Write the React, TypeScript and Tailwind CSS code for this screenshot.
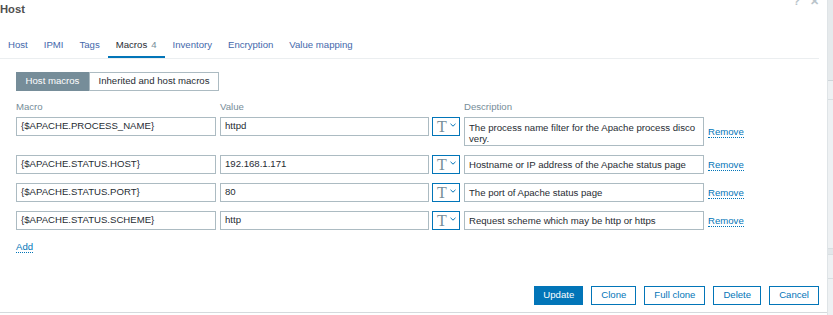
import React from "react";

const rows = [
  { macro: "{$APACHE.PROCESS_NAME}", value: "httpd", desc: ["The process name filter for the Apache process disco", "very."] },
  { macro: "{$APACHE.STATUS.HOST}", value: "192.168.1.171", desc: ["Hostname or IP address of the Apache status page"] },
  { macro: "{$APACHE.STATUS.PORT}", value: "80", desc: ["The port of Apache status page"] },
  { macro: "{$APACHE.STATUS.SCHEME}", value: "http", desc: ["Request scheme which may be http or https"] },
];

function TypeButton() {
  return (
    <div className="w-[28px] h-[19px] border border-[#0275b8] bg-white flex items-center pl-[4px] gap-[3px] box-border">
      <span className="font-['Liberation_Serif',serif] text-[16px] leading-[16px] text-[#768d99]">T</span>
      <svg width="6" height="4" viewBox="0 0 6 4" className="mt-[-3px]">
        <path d="M0.5 0.8 L3 3.2 L5.5 0.8" stroke="#0275b8" strokeWidth="1" fill="none" />
      </svg>
    </div>
  );
}

export default function App() {
  const tabs = [
    { label: "Host" },
    { label: "IPMI" },
    { label: "Tags" },
    { label: "Macros", count: "4", active: true },
    { label: "Inventory" },
    { label: "Encryption" },
    { label: "Value mapping" },
  ];
  return (
    <div className="w-[833px] h-[315px] flex bg-white font-['Liberation_Sans',Arial,sans-serif] text-[9.6px] text-[#1f2c33] overflow-hidden">
      <div className="w-[827px] h-[313px] border-b border-[#d5dadd] flex flex-col box-border">
        <div className="h-[31px] flex justify-between items-start">
          <div className="mt-[1.5px] text-[11.2px] leading-[14px] font-bold text-[#4f4f4f]">Host</div>
          <div className="flex gap-[10px] mr-[8px] mt-[-5px] text-[11px] leading-[12px] text-[#b9c4ca] font-bold">
            <span>?</span>
            <span>✕</span>
          </div>
        </div>
        <div className="h-[28px] mr-[8px] border-b border-[#ebeef0] flex box-border">
          {tabs.map((t) => (
            <div key={t.label} className="px-[8px] h-[27px] flex flex-col justify-between">
              <div className={"pt-[7.5px] leading-[12px] whitespace-nowrap " + (t.active ? "text-[#1f2c33]" : "text-[#4468ab]")}>
                {t.label}
                {t.count && <span className="text-[#768d99] ml-[4px]">{t.count}</span>}
              </div>
              <div className={"h-[2.5px] mx-[-8px] " + (t.active ? "bg-[#0275b8]" : "")}></div>
            </div>
          ))}
        </div>
        <div className="pl-[16px] flex flex-col">
          <div className="mt-[13px] flex h-[19px]">
            <div className="w-[73px] h-[19px] bg-[#768d99] text-white flex items-center justify-center">Host macros</div>
            <div className="w-[130px] h-[19px] border border-[#acbbc2] flex items-center justify-center box-border">Inherited and host macros</div>
          </div>
          <div className="mt-[9.5px] flex leading-[12px] text-[#768d99]">
            <div className="w-[204px]">Macro</div>
            <div className="w-[244px]">Value</div>
            <div>Description</div>
          </div>
          <div className="mt-[4.5px] flex flex-col gap-[9px]">
            {rows.map((r, i) => (
              <div key={i} className="flex items-start">
                <div className="w-[200px] h-[19px] border border-[#acbbc2] pl-[4px] flex items-center box-border whitespace-nowrap">{r.macro}</div>
                <div className="ml-[4px] w-[209px] h-[19px] border border-[#acbbc2] pl-[4px] flex items-center box-border">{r.value}</div>
                <div className="ml-[3px]"><TypeButton /></div>
                <div className={"ml-[4px] w-[240px] border border-[#acbbc2] pl-[4px] box-border leading-[11.5px] " + (r.desc.length > 1 ? "h-[29px] pt-[3.5px]" : "h-[19px] flex items-center")}>
                  {r.desc.length > 1 ? r.desc.map((d, j) => <div key={j} className="whitespace-nowrap">{d}</div>) : r.desc[0]}
                </div>
                <div className="ml-[4px] self-center text-[#0275b8] leading-[11px] border-b border-dotted border-[#0275b8]">Remove</div>
              </div>
            ))}
          </div>
          <div className="mt-[11px] self-start text-[#0275b8] leading-[11px] border-b border-dotted border-[#0275b8]">Add</div>
        </div>
        <div className="mt-auto mb-[7px] mr-[8px] flex justify-end gap-[8px]">
          <div className="px-[9px] h-[19px] bg-[#0275b8] text-white flex items-center justify-center">Update</div>
          <div className="px-[9px] h-[19px] border border-[#0275b8] text-[#0275b8] flex items-center justify-center box-border">Clone</div>
          <div className="px-[9px] h-[19px] border border-[#0275b8] text-[#0275b8] flex items-center justify-center box-border">Full clone</div>
          <div className="px-[9px] h-[19px] border border-[#0275b8] text-[#0275b8] flex items-center justify-center box-border">Delete</div>
          <div className="px-[9px] h-[19px] border border-[#0275b8] text-[#0275b8] flex items-center justify-center box-border">Cancel</div>
        </div>
      </div>
      <div className="flex-1 h-[315px] bg-[#eef1f3] border-l border-[#dfe4e7] flex flex-col">
        <div className="h-[80px] bg-[#e6eaec]"></div>
        <div className="h-[19px] border-t border-[#cfd6da]"></div>
        <div className="h-[149px] border-t border-[#d8dee1]"></div>
        <div className="h-[6px] bg-[#e2e7ea] border-t border-[#d8dee1]"></div>
        <div className="h-[24px] border-t border-[#d8dee1]"></div>
        <div className="flex-1 border-t border-[#d8dee1]"></div>
      </div>
    </div>
  );
}
